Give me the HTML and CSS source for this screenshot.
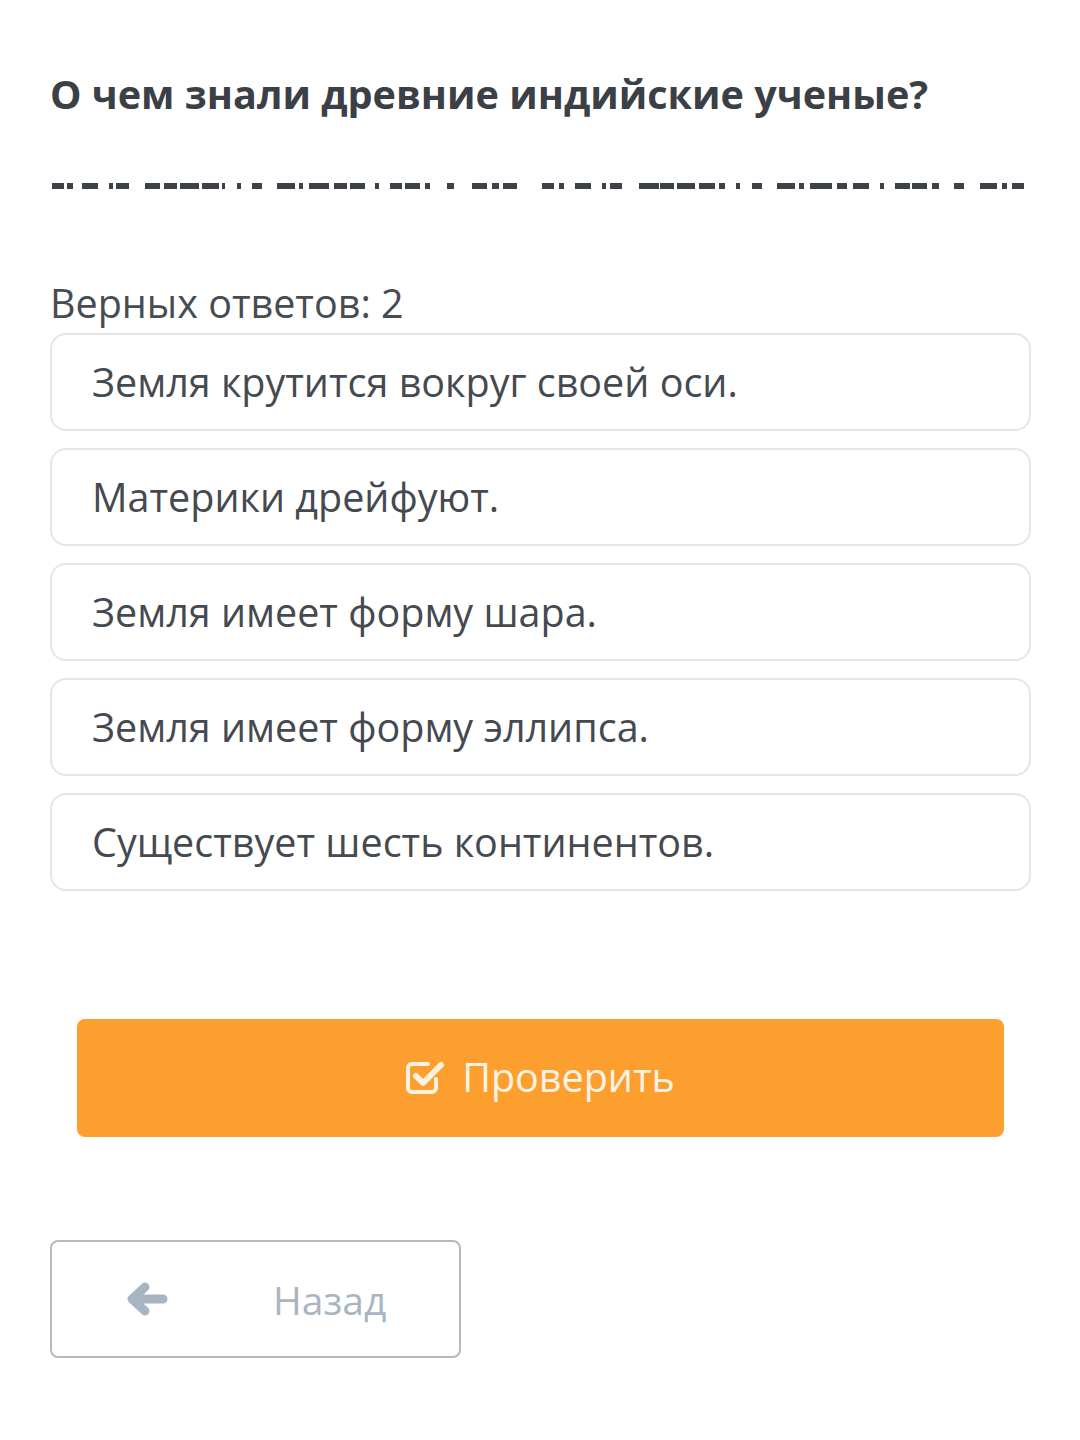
FILE: index.html
```html
<!DOCTYPE html>
<html lang="ru">
<head>
    <meta charset="UTF-8">
    <meta name="viewport" content="width=device-width, initial-scale=1.0">
    <title>Тест</title>
    <link rel="stylesheet" href="styles.css">
</head>
<body>
    <div class="page">
        <h1 class="question">О чем знали древние индийские ученые?</h1>

        <svg class="cut-line" width="980" height="6" viewBox="0 0 980 6">
            <g fill="#3d4249">
                <rect x="5" y="0" width="12" height="6"/><rect x="20" y="0" width="6" height="6"/>
                <rect x="35" y="0" width="16" height="6"/><rect x="62" y="0" width="4" height="6"/>
                <rect x="69" y="0" width="13" height="6"/><rect x="98" y="0" width="15" height="6"/>
                <rect x="117" y="0" width="13" height="6"/><rect x="133" y="0" width="19" height="6"/>
                <rect x="155" y="0" width="17" height="6"/><rect x="175" y="0" width="3" height="6"/>
                <rect x="190" y="0" width="4" height="6"/><rect x="205" y="0" width="10" height="6"/>
                <rect x="230" y="0" width="18" height="6"/><rect x="252" y="0" width="4" height="6"/>
                <rect x="262" y="0" width="20" height="6"/><rect x="287" y="0" width="13" height="6"/>
                <rect x="303" y="0" width="15" height="6"/><rect x="328" y="0" width="4" height="6"/>
                <rect x="343" y="0" width="12" height="6"/><rect x="358" y="0" width="15" height="6"/>
                <rect x="378" y="0" width="5" height="6"/><rect x="400" y="0" width="7" height="6"/>
                <rect x="425" y="0" width="15" height="6"/><rect x="445" y="0" width="7" height="6"/>
                <rect x="456" y="0" width="14" height="6"/>
                <rect x="495" y="0" width="12" height="6"/><rect x="512" y="0" width="5" height="6"/>
                <rect x="528" y="0" width="16" height="6"/><rect x="555" y="0" width="4" height="6"/>
                <rect x="563" y="0" width="12" height="6"/><rect x="592" y="0" width="20" height="6"/>
                <rect x="613" y="0" width="14" height="6"/><rect x="630" y="0" width="18" height="6"/>
                <rect x="652" y="0" width="16" height="6"/><rect x="672" y="0" width="6" height="6"/>
                <rect x="689" y="0" width="4" height="6"/><rect x="705" y="0" width="10" height="6"/>
                <rect x="730" y="0" width="18" height="6"/><rect x="752" y="0" width="5" height="6"/>
                <rect x="763" y="0" width="22" height="6"/><rect x="790" y="0" width="10" height="6"/>
                <rect x="806" y="0" width="16" height="6"/><rect x="833" y="0" width="4" height="6"/>
                <rect x="848" y="0" width="15" height="6"/><rect x="865" y="0" width="15" height="6"/>
                <rect x="885" y="0" width="7" height="6"/><rect x="907" y="0" width="10" height="6"/>
                <rect x="933" y="0" width="17" height="6"/><rect x="955" y="0" width="5" height="6"/>
                <rect x="965" y="0" width="12" height="6"/>
            </g>
        </svg>

        <div class="hint">Верных ответов: 2</div>

        <div class="answers">
            <div class="answer">Земля крутится вокруг своей оси.</div>
            <div class="answer">Материки дрейфуют.</div>
            <div class="answer">Земля имеет форму шара.</div>
            <div class="answer">Земля имеет форму эллипса.</div>
            <div class="answer">Существует шесть континентов.</div>
        </div>

        <button class="check-btn">
            <svg class="check-icon" width="40" height="36" viewBox="0 0 40 36">
                <path d="M30 20 V29 a4 4 0 0 1 -4 4 H6 a4 4 0 0 1 -4 -4 V9 a4 4 0 0 1 4 -4 H22" fill="none" stroke="#fdf1df" stroke-width="4" stroke-linecap="round"/>
                <path d="M10 17 L17 24 L35 6" fill="none" stroke="#fdf1df" stroke-width="6" stroke-linecap="round" stroke-linejoin="round"/>
            </svg>
            <span>Проверить</span>
        </button>

        <button class="back-btn">
            <svg class="back-icon" width="42" height="34" viewBox="0 0 42 34">
                <path d="M37 17 H9 M19 5 L6 17 L19 29" fill="none" stroke="#a7b5c3" stroke-width="9" stroke-linecap="round" stroke-linejoin="round"/>
            </svg>
            <span>Назад</span>
        </button>
    </div>
</body>
</html>
```

FILE: styles.css
```css
body {
    margin: 0;
    padding: 0;
    background: #ffffff;
    font-family: "Open Sans", "Noto Sans", sans-serif;
    color: #454a50;
}
.page {
    padding: 68px 49px 0 50px;
}
.question {
    margin: 0;
    font-size: 39.6px;
    line-height: 52px;
    font-weight: 700;
    color: #3b4047;
}
.cut-line {
    display: block;
    margin: 63px 0 0 -3px;
}
.hint {
    margin-top: 88px;
    font-size: 39.5px;
    line-height: 52px;
    color: #474c52;
}
.answers {
    margin-top: 4px;
}
.answer {
    box-sizing: border-box;
    height: 98px;
    margin-bottom: 17px;
    padding: 0 40px;
    display: flex;
    align-items: center;
    border: 2px solid #e3e6e8;
    border-radius: 16px;
    font-size: 39.5px;
    color: #454a50;
}
.check-btn {
    box-sizing: border-box;
    display: flex;
    align-items: center;
    justify-content: center;
    gap: 16px;
    width: 927px;
    height: 118px;
    margin: 128px 0 0 27px;
    border: none;
    border-radius: 8px;
    background: #fc9f2e;
    color: #fdf3e4;
    font-family: "Open Sans", "Noto Sans", sans-serif;
    font-size: 39.5px;
    padding: 0 0 2px 0;
}
.back-btn {
    box-sizing: border-box;
    display: flex;
    align-items: center;
    width: 411px;
    height: 118px;
    margin-top: 103px;
    padding: 0 0 0 74px;
    border: 2px solid #b3bbc2;
    border-radius: 8px;
    background: #ffffff;
    color: #a9b6c2;
    font-family: "Open Sans", "Noto Sans", sans-serif;
    font-size: 39px;
}
.back-icon {
    margin-right: 105px;
}
```
